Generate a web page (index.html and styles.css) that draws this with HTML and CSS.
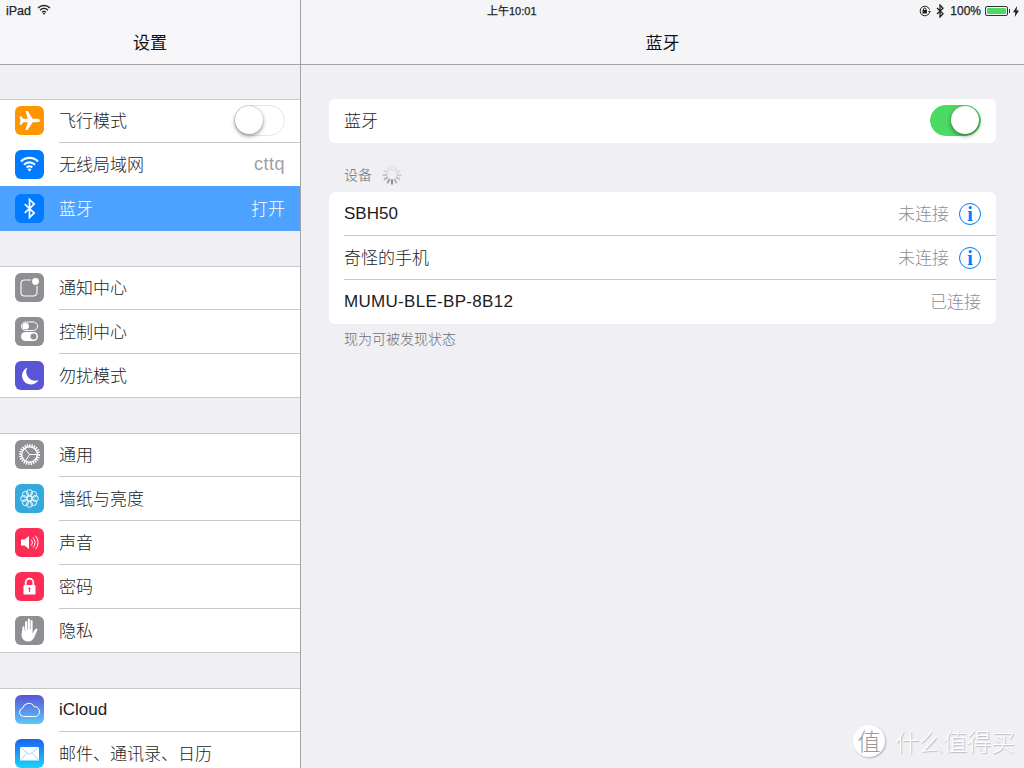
FILE: index.html
```html
<!DOCTYPE html>
<html lang="zh-CN">
<head>
  <meta charset="UTF-8" />
  <title>设置 - 蓝牙</title>
  <link rel="stylesheet" href="styles.css">
</head>
<body>
  <div class="ipad">

    <!-- status bar, lies over both headers -->
    <div class="status">
      <div class="status-left">
        <span class="latin">iPad</span>
        <svg width="14" height="11" viewBox="0 0 14 11"><path d="M1 4a8.500 8.500 0 0 1 12 0M3 6.200a5.500 5.500 0 0 1 8 0M5 8.200a2.800 2.800 0 0 1 4 0" fill="none" stroke="#222" stroke-width="1.300"/><path d="M7 10.800 5.700 9.400a1.900 1.900 0 0 1 2.600 0z" fill="#222"/></svg>
      </div>
      <div class="status-time">上午10:01</div>
      <div class="status-right">
        <svg width="12" height="12" viewBox="0 0 12 12"><path d="M10.500 7.500A4.800 4.800 0 1 1 10.500 4.500" fill="none" stroke="#222" stroke-width="1"/><path d="M9 6h3l-1.500 2z" fill="#222"/><rect x="3.500" y="5" width="4.500" height="3.500" fill="#222"/><path d="M4.500 5V4a1.300 1.300 0 0 1 2.500 0v1" fill="none" stroke="#222"/></svg>
        <svg class="status-bt" width="8" height="14" viewBox="0 0 8 14"><path d="M1 4 7 9.800 4 13V1L7 4.200 1 10" fill="none" stroke="#222" stroke-width="1.300"/></svg>
        <span class="status-pct latin">100%</span>
        <div class="battery"><div class="battery-fill"></div></div>
        <div class="battery-tip"></div>
        <svg class="status-bolt" width="6" height="11" viewBox="0 0 6 11"><path d="M4 0 0 6.200h2.300L1.800 11 6 4.500H3.600z" fill="#222"/></svg>
      </div>
    </div>

    <aside class="sidebar">
      <header class="navbar"><h1>设置</h1></header>

      <ul class="group">
        <li class="row">
          <span class="icon orange"><svg viewBox="0 0 29 29"><path d="M25 14.500c0-1-1.500-1.700-3.200-1.700h-4.100L12.600 5h-2.200l2.400 7.800H8.300L6.300 10.300H4.600l.9 4.200-.9 4.200h1.700l2-2.500h4.500L10.400 24h2.200l5.100-7.800h4.100c1.700 0 3.200-.7 3.200-1.700z" fill="#fff"/></svg></span>
          <span class="label">飞行模式</span>
          <span class="switch"><span class="knob"></span></span>
        </li>
        <li class="row">
          <span class="icon blue"><svg viewBox="0 0 29 29"><path d="M6 11.500a12 12 0 0 1 17 0M9 14.700a7.800 7.800 0 0 1 11 0M11.700 17.500a4 4 0 0 1 5.600 0" fill="none" stroke="#fff" stroke-width="2.200"/><path d="M14.500 21.500l-2-2.100a2.900 2.900 0 0 1 4 0z" fill="#fff"/></svg></span>
          <span class="label">无线局域网</span>
          <span class="value latin spaced">cttq</span>
        </li>
        <li class="row selected">
          <span class="icon blue"><svg viewBox="0 0 29 29"><path d="M9.800 10.200 19.200 18.900 14.500 23.500V5.500L19.200 10.100 9.800 18.800" fill="none" stroke="#fff" stroke-width="1.700"/></svg></span>
          <span class="label">蓝牙</span>
          <span class="value">打开</span>
        </li>
      </ul>

      <ul class="group">
        <li class="row">
          <span class="icon gray"><svg viewBox="0 0 29 29"><path d="M16 7H9.500A3.500 3.500 0 0 0 6 10.500v9A3.500 3.500 0 0 0 9.500 23h9a3.500 3.500 0 0 0 3.500-3.500V13" fill="none" stroke="#fff" stroke-width="1.100"/><circle cx="20.500" cy="8.500" r="3.400" fill="#fff"/></svg></span>
          <span class="label">通知中心</span>
        </li>
        <li class="row">
          <span class="icon gray"><svg viewBox="0 0 29 29"><rect x="6.500" y="5" width="16" height="8.500" rx="4.250" fill="none" stroke="#fff" stroke-width="1"/><circle cx="10.700" cy="9.200" r="3.300" fill="#fff"/><rect x="6" y="15" width="17" height="9" rx="4.500" fill="#fff"/><circle cx="18.500" cy="19.500" r="3" fill="#8e8e93"/></svg></span>
          <span class="label">控制中心</span>
        </li>
        <li class="row">
          <span class="icon purple"><svg viewBox="0 0 29 29"><path d="M12.500 6.500A8.800 8.800 0 1 0 23.500 19 8.800 8.800 0 0 1 12.500 6.500z" fill="#fff"/></svg></span>
          <span class="label">勿扰模式</span>
        </li>
      </ul>

      <ul class="group">
        <li class="row">
          <span class="icon gray"><svg viewBox="0 0 29 29"><circle cx="14.500" cy="14.500" r="9.300" fill="none" stroke="#fff" stroke-width="2.400" stroke-dasharray="1.300 1.100"/><circle cx="14.500" cy="14.500" r="7.800" fill="none" stroke="#fff" stroke-width="1.400"/><path d="M14.500 14.500 9.500 8.500M14.500 14.500H22M14.500 14.500 10.500 21" fill="none" stroke="#fff" stroke-width="1"/></svg></span>
          <span class="label">通用</span>
        </li>
        <li class="row">
          <span class="icon cyan"><svg viewBox="0 0 29 29"><g fill="none" stroke="#fff" stroke-width=".9"><circle cx="14.500" cy="14.500" r="2.300"/><circle cx="14.500" cy="8.700" r="3"/><circle cx="14.500" cy="20.300" r="3"/><circle cx="8.700" cy="14.500" r="3"/><circle cx="20.300" cy="14.500" r="3"/><circle cx="10.400" cy="10.400" r="3"/><circle cx="18.600" cy="10.400" r="3"/><circle cx="10.400" cy="18.600" r="3"/><circle cx="18.600" cy="18.600" r="3"/></g></svg></span>
          <span class="label">墙纸与亮度</span>
        </li>
        <li class="row">
          <span class="icon pink"><svg viewBox="0 0 29 29"><path d="M6 11.500h3.500L14 8v13l-4.500-3.500H6z" fill="#fff"/><path d="M16 11.500a4 4 0 0 1 0 6M18 9.500a7 7 0 0 1 0 10M20.500 7.800a10 10 0 0 1 0 13.400" fill="none" stroke="#fff" stroke-width="1"/></svg></span>
          <span class="label">声音</span>
        </li>
        <li class="row">
          <span class="icon pink"><svg viewBox="0 0 29 29"><path d="M10.700 13v-2.500a3.800 3.800 0 0 1 7.600 0V13" fill="none" stroke="#fff" stroke-width="1.800"/><rect x="8.500" y="13" width="12" height="9.500" rx="1" fill="#fff"/><rect x="14" y="16" width="1" height="4" fill="#ff2d55"/><circle cx="14.500" cy="16.500" r="1.100" fill="#ff2d55"/></svg></span>
          <span class="label">密码</span>
        </li>
        <li class="row">
          <span class="icon gray"><svg viewBox="0 0 29 29"><path d="M7.500 11.500c0-1.700 2-1.700 2 0v3h.6V6.500c0-1.700 2.100-1.700 2.100 0v7h.6V3.800c0-1.700 2.100-1.700 2.100 0v9.700h.6V5.300c0-1.700 2.100-1.700 2.100 0v11.500l.4.600c.8-2.300 1.800-4.200 3-4.700 1.400-.5 1.700.6 1.200 1.600-1.200 2.500-1.900 5.600-3.500 8-1.300 2-3 3.300-5.300 3.300-4 0-6.700-2.500-6.900-6.800z" fill="#fff"/></svg></span>
          <span class="label">隐私</span>
        </li>
      </ul>

      <ul class="group">
        <li class="row">
          <span class="icon cloud"><svg viewBox="0 0 29 29"><path d="M8.500 21.500a4.200 4.200 0 0 1-.7-8.300 6 6 0 0 1 11.300-1.500 5 5 0 0 1 1.700 9.800z" fill="none" stroke="#fff" stroke-width="1"/></svg></span>
          <span class="label latin">iCloud</span>
        </li>
        <li class="row">
          <span class="icon mail"><svg viewBox="0 0 29 29"><rect x="5" y="8" width="19" height="13.500" fill="#fff"/><path d="M5 8l9.500 7.500L24 8M5 21.500l7-7.500M24 21.500l-7-7.500" fill="none" stroke="#8cc8fa" stroke-width=".8"/></svg></span>
          <span class="label">邮件、通讯录、日历</span>
        </li>
      </ul>
    </aside>

    <main class="detail">
      <header class="navbar navbar-right"><h1>蓝牙</h1></header>

      <div class="detail-body">
        <div class="card card-top">
          <div class="card-row">
            <span class="card-label">蓝牙</span>
            <span class="switch on"><span class="knob"></span></span>
          </div>
        </div>

        <div class="section-title">
          <span class="section-name">设备</span>
          <svg class="spinner" width="22" height="22" viewBox="0 0 22 22">
            <g stroke-width="2" stroke-linecap="butt" fill="none">
              <path d="M11 1.500v5" stroke="#e4e4e6"/>
              <path d="M15.700 2.800l-2.500 4.300" stroke="#e0e0e2"/>
              <path d="M19.200 6.300l-4.300 2.500" stroke="#dcdcde"/>
              <path d="M20.500 11h-5" stroke="#d4d4d6"/>
              <path d="M19.200 15.700l-4.300-2.500" stroke="#c8c8ca"/>
              <path d="M15.700 19.200l-2.500-4.300" stroke="#b4b4b6"/>
              <path d="M11 20.500v-5" stroke="#8e8e90"/>
              <path d="M6.300 19.200l2.500-4.300" stroke="#a0a0a2"/>
              <path d="M2.800 15.700l4.300-2.500" stroke="#b4b4b6"/>
              <path d="M1.500 11h5" stroke="#c8c8ca"/>
              <path d="M2.800 6.300l4.300 2.500" stroke="#d8d8da"/>
              <path d="M6.300 2.800l2.500 4.300" stroke="#e0e0e2"/>
            </g>
          </svg>
        </div>

        <div class="card">
          <div class="card-row">
            <span class="card-label latin">SBH50</span>
            <span class="card-value">未连接</span>
            <span class="info">i</span>
          </div>
          <div class="card-row">
            <span class="card-label">奇怪的手机</span>
            <span class="card-value">未连接</span>
            <span class="info">i</span>
          </div>
          <div class="card-row">
            <span class="card-label latin wide">MUMU-BLE-BP-8B12</span>
            <span class="card-value">已连接</span>
          </div>
        </div>

        <p class="section-foot">现为可被发现状态</p>
      </div>
    </main>

    <!-- site watermark stamped on the screenshot -->
    <div class="watermark">
      <span class="watermark-badge">值</span>
      <span class="watermark-text">什么值得买</span>
    </div>
  </div>
</body>
</html>
```

FILE: styles.css
```css
:root {
  --bg: #efeff4;
  --bar: #f6f6f8;
  --line: #c8c7cc;
  --edge: #a2a2a6;
  --text: #1c1c1e;
  --muted: #8e8e93;
  --ios-blue: #007aff;
  --green: #4cd964;
}

* {
  box-sizing: border-box;
}

html, body {
  margin: 0;
  padding: 0;
  height: 100%;
  overflow: hidden;
}

body {
  font-family: "Noto Sans CJK SC", "Liberation Sans", sans-serif;
  font-weight: 300;
  color: var(--text);
  background: var(--bg);
}

.ipad {
  position: relative;
  display: flex;
  width: 1024px;
  height: 768px;
  overflow: hidden;
}

/* status bar */
.status {
  position: absolute;
  top: 0;
  left: 0;
  width: 100%;
  height: 20px;
  font-size: 12px;
  font-weight: 400;
  color: #222;
  -webkit-text-stroke: 0.25px #222;
}

.status-left {
  position: absolute;
  left: 6px;
  top: 3px;
  display: flex;
  align-items: center;
  gap: 6px;
  font-size: 12.500px;
  line-height: 16px;
}

.status-left svg {
  margin-top: -3px;
}

.status-time {
  position: absolute;
  top: 2px;
  left: 487px;
  line-height: 18px;
  font-family: "Liberation Sans", "Noto Sans CJK SC", sans-serif;
  font-size: 11px;
}

.status-right {
  position: absolute;
  top: 3px;
  right: 5px;
  height: 16px;
  display: flex;
  align-items: center;
}

.status-bt {
  margin-left: 5px;
}

.status-pct {
  margin-left: 6px;
  font-size: 12px;
}

.battery {
  margin-left: 4px;
  width: 23px;
  height: 10px;
  padding: 1px;
  border: 1px solid #333;
  border-radius: 2px;
}

.battery-fill {
  height: 100%;
  background: var(--green);
  border-radius: 1px;
}

.battery-tip {
  width: 1px;
  height: 4px;
  margin-left: 1px;
  background: #333;
}

.status-bolt {
  margin-left: 3px;
}

/* sidebar */
.sidebar {
  flex: 0 0 301px;
  height: 100%;
  border-right: 1px solid var(--edge);
}

.detail {
  flex: 1;
  height: 100%;
}

.navbar {
  height: 65px;
  padding-top: 20px;
  background: var(--bar);
  border-bottom: 1px solid var(--edge);
}

.navbar-right {
  background: #f5f5f8;
}

.navbar h1 {
  margin: 0;
  font-size: 17px;
  font-weight: 400;
  line-height: 44px;
  text-align: center;
  color: #111;
}

.group {
  list-style: none;
  margin: 0 0 35px;
  padding: 0;
  background: #fff;
}

.navbar + .group {
  margin-top: 34px;
}

.row {
  position: relative;
  display: flex;
  align-items: center;
  height: 44px;
  padding: 0 15px 1px;
}

/* row rules: short between rows, full width at the group edges */
.row::after {
  content: "";
  position: absolute;
  left: 59px;
  right: 0;
  bottom: 0;
  height: 1px;
  background: var(--line);
}

.row:last-child::after {
  left: 0;
}

.row:first-child::before {
  content: "";
  position: absolute;
  left: 0;
  right: 0;
  top: 0;
  height: 1px;
  background: var(--line);
}

.row.selected {
  margin-top: -1px;
  height: 45px;
  padding-top: 1px;
  background: #4da2ff;
  color: #fff;
}

.row.selected::after {
  display: none;
}

.icon {
  flex: 0 0 29px;
  width: 29px;
  height: 29px;
  border-radius: 6px;
  margin-right: 15px;
}

.icon svg {
  display: block;
  width: 29px;
  height: 29px;
}

.orange { background: #ff9500; }
.blue { background: var(--ios-blue); }
.gray { background: #8e8e93; }
.purple { background: #5856d6; }
.cyan { background: #34aadc; }
.pink { background: #ff2d55; }
.cloud { background: linear-gradient(#5856d6, #5ac8fa); }
.mail { background: linear-gradient(#1d62f0, #19d5fd); }

.label,
.card-label {
  flex: 1;
  font-size: 17px;
}

.label,
.value {
  padding-bottom: 3px;
}

.card-label,
.card-value {
  padding-bottom: 4px;
}

.value {
  font-size: 17px;
  color: var(--muted);
}

.selected .value {
  color: #fff;
}

/* latin text sits on a different line box than the CJK font, no nudge needed */
.latin {
  font-family: "Liberation Sans", sans-serif;
  padding-bottom: 0;
}

.wide {
  letter-spacing: 0.3px;
}

.spaced {
  font-size: 18px;
  letter-spacing: 0.5px;
  color: #a0a0a4;
}

/* switch */
.switch {
  position: relative;
  flex: 0 0 51px;
  width: 51px;
  height: 31px;
  border-radius: 16px;
  background: #fff;
  border: 1.500px solid #e5e5e5;
}

.switch.on {
  margin-bottom: 1px;
  background: var(--green);
  border-color: var(--green);
}

.knob {
  position: absolute;
  top: 0;
  left: 0;
  width: 28px;
  height: 28px;
  border-radius: 50%;
  background: #fff;
  box-shadow: 0 2px 4px rgba(0,0,0,0.4), 0 0 1px rgba(0,0,0,0.3);
}

.switch.on .knob {
  left: 20px;
}

/* detail */
.detail-body {
  padding: 34px 28px 0;
}

.card {
  background: #fff;
  border-radius: 6px;
}

.card-row {
  position: relative;
  display: flex;
  align-items: center;
  height: 44px;
  padding: 0 15px;
}

.card-row + .card-row::before {
  content: "";
  position: absolute;
  top: -1px;
  left: 15px;
  right: 0;
  height: 1px;
  background: var(--line);
}

.card-value {
  font-size: 17px;
  color: var(--muted);
}

.info {
  width: 22px;
  height: 22px;
  margin-left: 10px;
  border: 1px solid var(--ios-blue);
  border-radius: 50%;
  color: var(--ios-blue);
  font-family: "Liberation Serif", serif;
  font-size: 20px;
  font-weight: 700;
  line-height: 21px;
  text-align: center;
}

.section-title {
  display: flex;
  align-items: center;
  gap: 9px;
  height: 49px;
  padding: 14px 15px 0;
  font-size: 14px;
  color: #6d6d72;
}

.section-name {
  padding-bottom: 2px;
}

.section-foot {
  margin: 5px 0 0;
  padding: 0 15px;
  font-size: 14px;
  line-height: 18px;
  color: #6d6d72;
}

/* watermark */
.watermark {
  position: absolute;
  right: 9px;
  bottom: 11px;
  display: flex;
  align-items: center;
  gap: 10px;
}

.watermark-badge {
  width: 32px;
  height: 32px;
  border-radius: 50%;
  background: #fff;
  box-shadow: 1px 1px 2px rgba(0,0,0,0.25);
  color: #999;
  font-size: 23px;
  line-height: 31px;
  text-align: center;
}

.watermark-text {
  font-size: 24px;
  line-height: 32px;
  color: #fff;
  text-shadow: 1px 1px 1px rgba(0,0,0,0.22);
}
```
